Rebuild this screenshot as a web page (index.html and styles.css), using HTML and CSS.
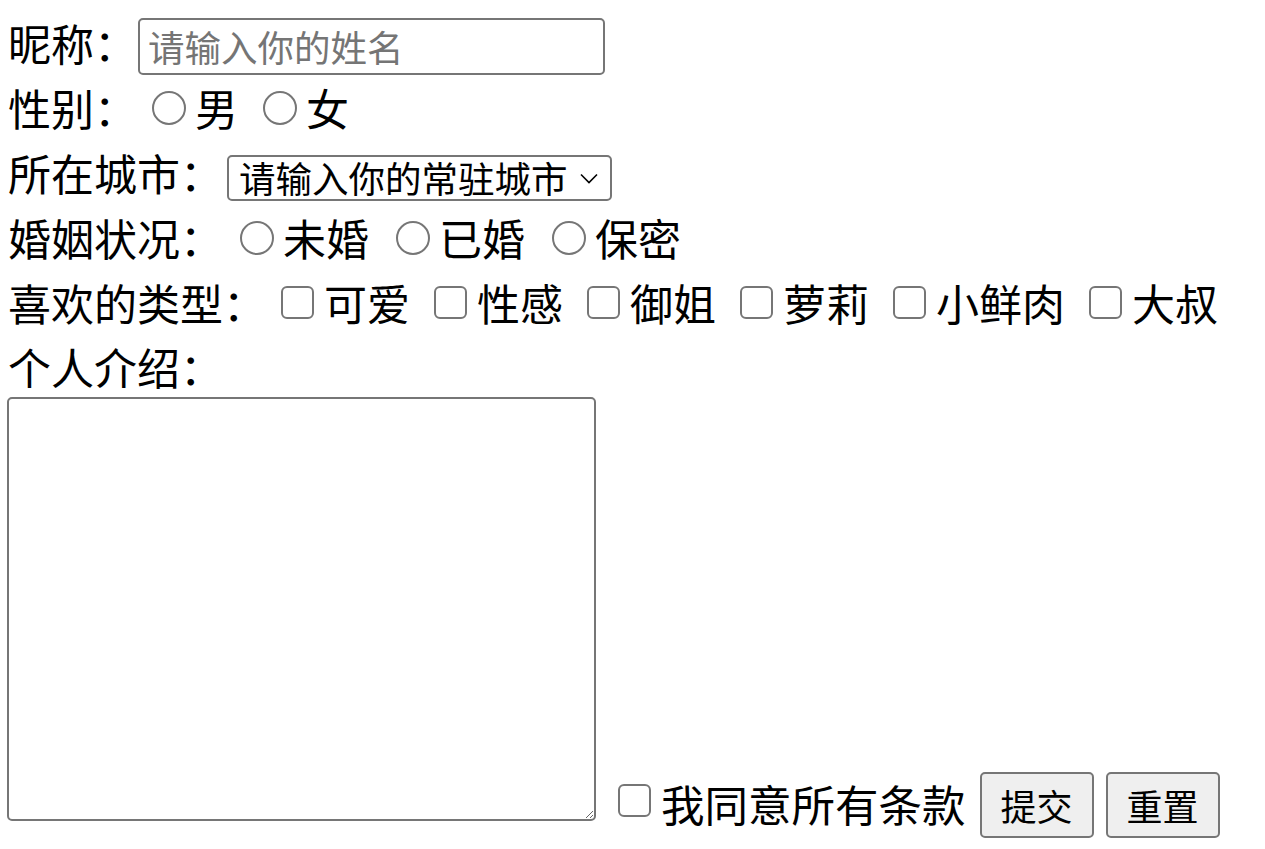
FILE: index.html
```html
<!DOCTYPE html>
<html lang="zh-CN">
<head>
    <meta charset="UTF-8">
    <meta name="viewport" content="width=device-width, initial-scale=1.0">
    <title>注册表单</title>
    <link rel="stylesheet" href="styles.css">
</head>
<body>
    <form class="signup">
        <div class="row">
            <span class="label">昵称：</span>
            <input type="text" class="name-input" placeholder="请输入你的姓名">
        </div>

        <div class="row">
            <span class="label">性别：</span>
            <div class="choices">
                <label class="choice"><input type="radio" name="sex"> 男</label>
                <label class="choice"><input type="radio" name="sex"> 女</label>
            </div>
        </div>

        <div class="row">
            <span class="label">所在城市：</span>
            <select class="city-select">
                <option>请输入你的常驻城市</option>
                <option>北京</option>
                <option>上海</option>
                <option>广州</option>
                <option>深圳</option>
            </select>
        </div>

        <div class="row">
            <span class="label">婚姻状况：</span>
            <div class="choices choices-wide">
                <label class="choice"><input type="radio" name="marry"> 未婚</label>
                <label class="choice"><input type="radio" name="marry"> 已婚</label>
                <label class="choice"><input type="radio" name="marry"> 保密</label>
            </div>
        </div>

        <div class="row">
            <span class="label">喜欢的类型：</span>
            <div class="choices choices-tight">
                <label class="choice"><input type="checkbox"> 可爱</label>
                <label class="choice"><input type="checkbox"> 性感</label>
                <label class="choice"><input type="checkbox"> 御姐</label>
                <label class="choice"><input type="checkbox"> 萝莉</label>
                <label class="choice"><input type="checkbox"> 小鲜肉</label>
                <label class="choice"><input type="checkbox"> 大叔</label>
            </div>
        </div>

        <div class="row row-intro">
            <span class="label">个人介绍：</span>
        </div>

        <div class="bottom-row">
            <textarea class="intro-text"></textarea>
            <label class="agree"><input type="checkbox"> 我同意所有条款</label>
            <button type="submit" class="btn btn-submit">提交</button>
            <button type="reset" class="btn btn-reset">重置</button>
        </div>
    </form>
</body>
</html>
```

FILE: styles.css
```css
body {
    margin: 0;
    padding: 10px 8px 0;
    font-family: "Noto Sans CJK SC", "Liberation Sans", sans-serif;
    font-size: 43px;
    color: #000;
    background: #fff;
}
.row {
    display: flex;
    align-items: center;
    height: 65px;
}
.row-intro {
    height: 62px;
}
.label {
    line-height: 1;
    white-space: nowrap;
}
.name-input {
    box-sizing: border-box;
    width: 467px;
    height: 57px;
    margin: 8px 0 0 1px;
    padding: 0 8px;
    font-family: inherit;
    font-size: 36.5px;
    border: 2px solid #767676;
    border-radius: 5px;
}
.name-input::placeholder {
    color: #757575;
}
.city-select {
    box-sizing: border-box;
    width: 385px;
    height: 46px;
    margin: 11px 0 0 4px;
    padding: 0 0 0 10px;
    font-family: inherit;
    font-size: 36.5px;
    line-height: 42px;
    color: #000;
    border: 2px solid #767676;
    border-radius: 5px;
    appearance: none;
    background: #fff url("data:image/svg+xml,%3Csvg xmlns='http://www.w3.org/2000/svg' viewBox='0 0 18 11'%3E%3Cpath d='M1 1.5l8 8l8-8' fill='none' stroke='%23000' stroke-width='1.6'/%3E%3C/svg%3E") no-repeat right 12px center / 18px 11px;
}
.choices {
    display: flex;
    align-items: center;
    gap: 25px;
    margin-left: 15px;
}
.choices-wide {
    gap: 27px;
    margin-left: 17px;
}
.choices-tight {
    gap: 24px;
}
.choice, .agree {
    display: flex;
    align-items: center;
    line-height: 1;
    white-space: nowrap;
}
input[type="radio"], input[type="checkbox"] {
    appearance: none;
    box-sizing: border-box;
    margin: 0 9px 0 0;
    background: #fff;
    border: 2.5px solid #767676;
}
input[type="radio"] {
    width: 34px;
    height: 34px;
    border-radius: 50%;
}
input[type="checkbox"] {
    width: 33px;
    height: 33px;
    border-radius: 6px;
    margin-right: 10px;
}
.bottom-row {
    display: flex;
    align-items: flex-end;
}
.intro-text {
    box-sizing: border-box;
    width: 589px;
    height: 424px;
    margin: 0 0 17px -1px;
    border: 2px solid #767676;
    border-radius: 5px;
    font-family: inherit;
}
.agree {
    margin: 0 0 13px 22px;
    font-size: 43.5px;
}
.agree input[type="checkbox"] {
    margin: 0 10px 5px 0;
}
.btn {
    box-sizing: border-box;
    width: 114px;
    height: 66px;
    padding: 0;
    font-family: inherit;
    font-size: 36px;
    color: #000;
    background: #efefef;
    border: 2px solid #767676;
    border-radius: 5px;
}
.btn-submit {
    margin-left: 14px;
}
.btn-reset {
    margin-left: 12px;
}
```
